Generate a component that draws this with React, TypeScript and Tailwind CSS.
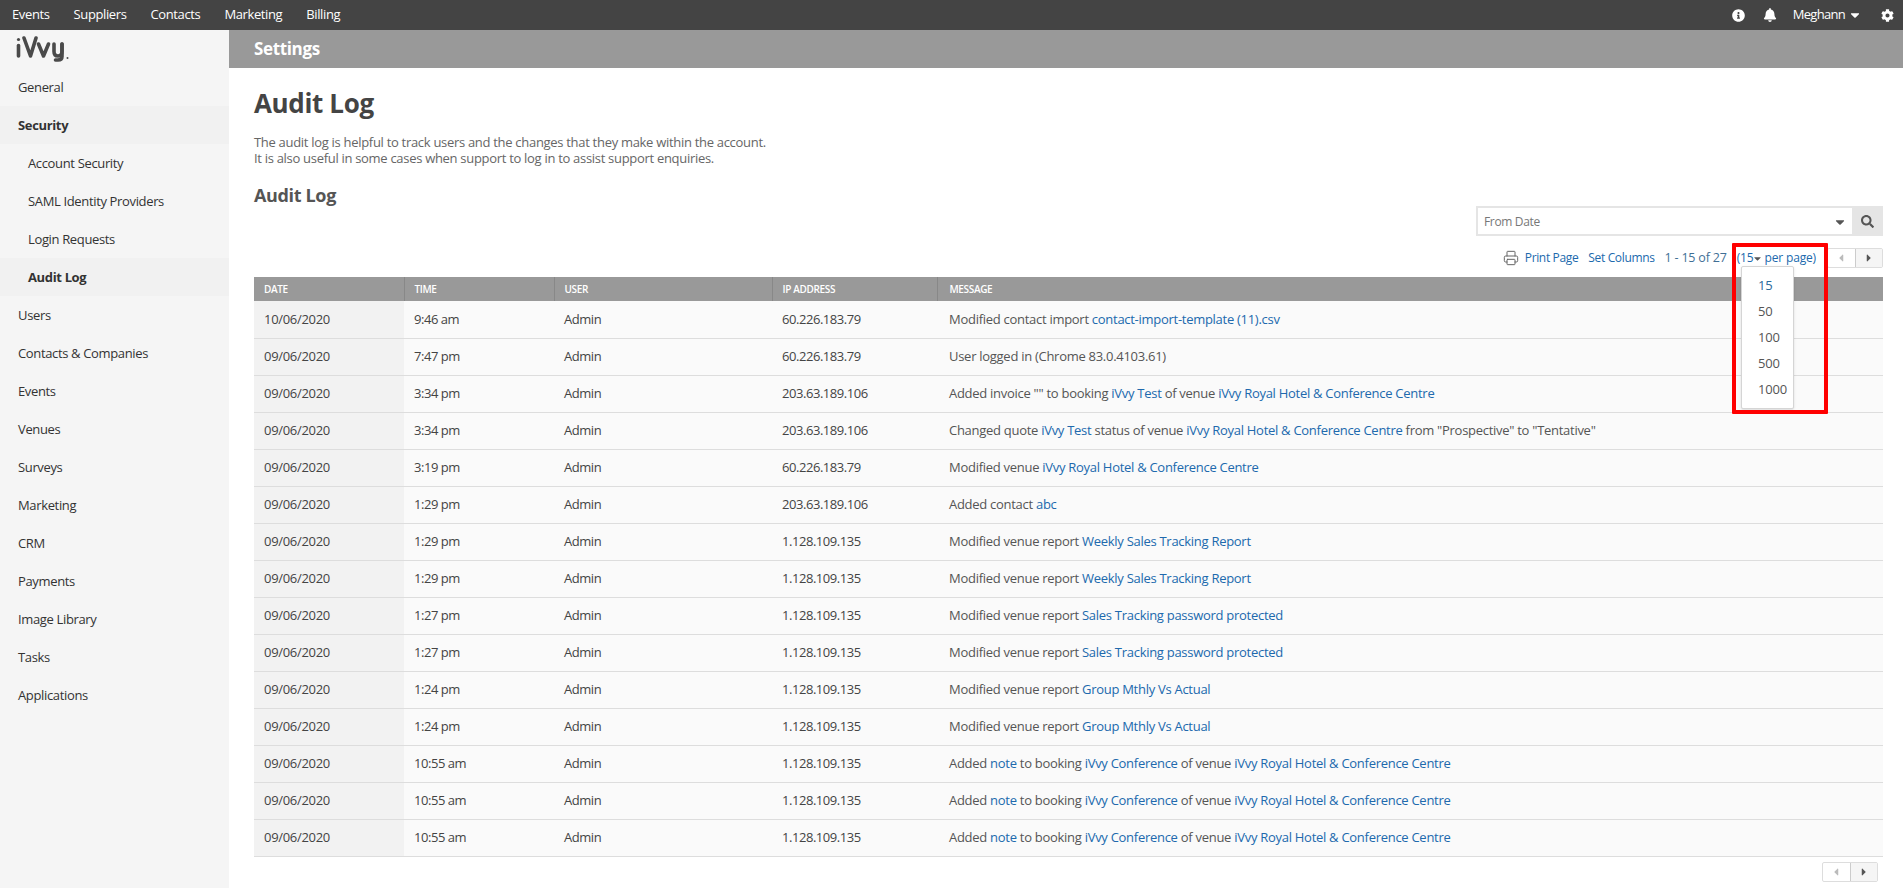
import { FaBell, FaCaretDown, FaCaretLeft, FaCaretRight, FaCog, FaInfoCircle, FaSearch } from "react-icons/fa";
import { Printer } from "lucide-react";

const topNav = ["Events", "Suppliers", "Contacts", "Marketing", "Billing"];

const sideNav = [
  { label: "General" },
  { label: "Security", active: true },
  { label: "Account Security", sub: true },
  { label: "SAML Identity Providers", sub: true },
  { label: "Login Requests", sub: true },
  { label: "Audit Log", sub: true, active: true },
  { label: "Users" },
  { label: "Contacts & Companies" },
  { label: "Events" },
  { label: "Venues" },
  { label: "Surveys" },
  { label: "Marketing" },
  { label: "CRM" },
  { label: "Payments" },
  { label: "Image Library" },
  { label: "Tasks" },
  { label: "Applications" },
];

const A = ({ children }: { children: React.ReactNode }) => (
  <a className="text-[#2069ad]">{children}</a>
);

const venue = "iVvy Royal Hotel & Conference Centre";

const rows: [string, string, string, React.ReactNode][] = [
  ["10/06/2020", "9:46 am", "60.226.183.79", <>Modified contact import <A>contact-import-template (11).csv</A></>],
  ["09/06/2020", "7:47 pm", "60.226.183.79", <>User logged in (Chrome 83.0.4103.61)</>],
  ["09/06/2020", "3:34 pm", "203.63.189.106", <>Added invoice "" to booking <A>iVvy Test</A> of venue <A>{venue}</A></>],
  ["09/06/2020", "3:34 pm", "203.63.189.106", <>Changed quote <A>iVvy Test</A> status of venue <A>{venue}</A> from "Prospective" to "Tentative"</>],
  ["09/06/2020", "3:19 pm", "60.226.183.79", <>Modified venue <A>{venue}</A></>],
  ["09/06/2020", "1:29 pm", "203.63.189.106", <>Added contact <A>abc</A></>],
  ["09/06/2020", "1:29 pm", "1.128.109.135", <>Modified venue report <A>Weekly Sales Tracking Report</A></>],
  ["09/06/2020", "1:29 pm", "1.128.109.135", <>Modified venue report <A>Weekly Sales Tracking Report</A></>],
  ["09/06/2020", "1:27 pm", "1.128.109.135", <>Modified venue report <A>Sales Tracking password protected</A></>],
  ["09/06/2020", "1:27 pm", "1.128.109.135", <>Modified venue report <A>Sales Tracking password protected</A></>],
  ["09/06/2020", "1:24 pm", "1.128.109.135", <>Modified venue report <A>Group Mthly Vs Actual</A></>],
  ["09/06/2020", "1:24 pm", "1.128.109.135", <>Modified venue report <A>Group Mthly Vs Actual</A></>],
  ["09/06/2020", "10:55 am", "1.128.109.135", <>Added <A>note</A> to booking <A>iVvy Conference</A> of venue <A>{venue}</A></>],
  ["09/06/2020", "10:55 am", "1.128.109.135", <>Added <A>note</A> to booking <A>iVvy Conference</A> of venue <A>{venue}</A></>],
  ["09/06/2020", "10:55 am", "1.128.109.135", <>Added <A>note</A> to booking <A>iVvy Conference</A> of venue <A>{venue}</A></>],
];

function Pager() {
  return (
    <div className="flex h-5 w-[56px] rounded-[2px] border border-[#ddd] text-[#555]">
      <div className="flex flex-1 items-center justify-center text-[#bbb]">
        <FaCaretLeft className="h-3 w-3" />
      </div>
      <div className="flex flex-1 items-center justify-center border-l border-[#ccc] bg-[#f5f5f5]">
        <FaCaretRight className="h-3 w-3" />
      </div>
    </div>
  );
}

function Logo() {
  return (
    <svg viewBox="0 0 60 26" className="h-[26px] w-[60px]" fill="none" stroke="#4a4a4a" strokeWidth="3.6" strokeLinecap="round" strokeLinejoin="round">
      <path d="M2.5 9.5V20" />
      <circle cx="2.5" cy="3.5" r="1.6" fill="#4a4a4a" stroke="none" />
      <path d="M8 2l6.5 18L20 2" />
      <path d="M22.5 8l5 12 5-12" />
      <path d="M38 8v7.5c0 3 1.7 4.5 4 4.5s4-1.500 4-4.500V8" />
      <path d="M46 8v12.500c0 2.500-1.800 3.500-4 3.500h-2.500" />
      <circle cx="51.500" cy="22" r="1" fill="#4a4a4a" stroke="none" />
    </svg>
  );
}

export default function App() {
  return (
    <div className="flex h-screen flex-col overflow-hidden bg-white font-['Open_Sans',sans-serif] text-[13px] tracking-[-0.35px] text-[#444]">
      {/* Top bar */}
      <header className="flex h-[30px] shrink-0 items-center justify-between bg-[#444] pl-3 pr-[9px] text-white">
        <nav className="flex gap-6 tracking-[-0.38px]">
          {topNav.map((item) => (
            <span key={item}>{item}</span>
          ))}
        </nav>
        <div className="flex items-center">
          <FaInfoCircle className="h-[13px] w-[13px]" />
          <FaBell className="ml-[18px] h-[14px] w-[14px]" />
          <span className="ml-[16px] tracking-[-0.7px]">Meghann</span>
          <FaCaretDown className="ml-[3px] h-[14px] w-[14px]" />
          <FaCog className="ml-[19px] h-[13px] w-[13px]" />
        </div>
      </header>

      <div className="flex min-h-0 flex-1">
        {/* Sidebar */}
        <aside className="w-[229px] shrink-0 bg-[#f5f5f5]">
          <div className="flex h-[38px] items-start pl-4 pt-[6px]">
            <Logo />
          </div>
          {sideNav.map((item) => (
            <div
              key={item.label}
              className={`flex h-[38px] items-center pt-[2px] text-[#333] ${item.sub ? "pl-7" : "pl-[18px]"} ${item.active ? "bg-[#f1f1f1] font-bold" : ""}`}
            >
              {item.label}
            </div>
          ))}
        </aside>

        {/* Main */}
        <main className="min-w-0 flex-1">
          <div className="flex h-[38px] items-center bg-[#999] pl-[25px] text-[17px] font-bold text-white">Settings</div>
          <div className="pl-[25px] pr-5">
            <h1 className="mt-[17px] text-[26px] leading-[36px] font-bold text-[#444]">Audit Log</h1>
            <p className="mt-[13px] leading-[16px] tracking-[-0.3px] text-[#666]">
              The audit log is helpful to track users and the changes that they make within the account.
              <br />
              It is also useful in some cases when support to log in to assist support enquiries.
            </p>
            <h3 className="mt-[17px] text-[18px] leading-[24px] font-bold text-[#555]">Audit Log</h3>

            <div className="mt-[-1px] flex justify-end">
              <div className="flex h-[30px] w-[407px] border-2 border-r-0 border-[#e5e5e5] text-[12px] text-[#777]">
                <div className="flex flex-1 items-center justify-between pl-[6px] pr-[5px] pt-[1px]">
                  From Date
                  <FaCaretDown className="h-[14px] w-[14px] text-[#555]" />
                </div>
                <div className="-my-[2px] flex w-[31px] items-center justify-center bg-[#e5e5e5]">
                  <FaSearch className="h-[13px] w-[13px] text-[#555]" />
                </div>
              </div>
            </div>

            <div className="relative mt-3 flex h-5 items-center justify-end text-[12px] tracking-[-0.15px] text-[#2069ad]">
              <Printer className="mr-[6px] h-[16px] w-[16px] text-[#666]" strokeWidth={1.5} />
              <span className="tracking-[-0.35px]">Print Page</span>
              <span className="ml-[10px] tracking-[-0.35px]">Set Columns</span>
              <span className="ml-[10px] text-[12.500px] tracking-[-0.2px] text-[#3f6f95]">1 - 15 of 27</span>
              <span className="ml-[10px] flex items-center">
                (15
                <FaCaretDown className="h-[11px] w-[9px] text-[#555]" />
                <span className="ml-[2px]">per page)</span>
              </span>
              <div className="ml-[11px]">
                <Pager />
              </div>

              {/* Open per-page menu */}
              <div className="absolute right-[89px] top-[18px] z-10 flex h-[143px] w-[53px] flex-col rounded-[2px] border border-[#d5d5d5] bg-white pt-[6px] pl-4 text-[13px] text-[#555] shadow-sm">
                {["15", "50", "100", "500", "1000"].map((n, i) => (
                  <span key={n} className={`flex h-[26px] shrink-0 items-center ${i === 0 ? "text-[#2c6a9c]" : ""}`}>
                    {n}
                  </span>
                ))}
              </div>
              {/* Red annotation box */}
              <div className="absolute right-[55px] top-[-5px] z-20 h-[171px] w-[96px] rounded-[1px] border-4 border-[#ff0000]" />
            </div>

            <table className="mt-[9px] w-full table-fixed border-collapse text-[13px] tracking-[-0.45px]">
              <colgroup>
                <col className="w-[150px]" />
                <col className="w-[150px]" />
                <col className="w-[218px]" />
                <col className="w-[165px]" />
                <col />
              </colgroup>
              <thead>
                <tr className="h-6 bg-[#999] text-left text-[10px] font-semibold tracking-[-0.35px] text-white">
                  {["DATE", "TIME", "USER", "IP ADDRESS", "MESSAGE"].map((h, i) => (
                    <th key={h} className={`font-semibold ${i === 4 ? "pl-3 pr-[10px]" : "border-r border-[#888] px-[10px]"}`}>
                      {h}
                    </th>
                  ))}
                </tr>
              </thead>
              <tbody>
                {rows.map(([date, time, ip, message], i) => (
                  <tr key={i} className="h-[37px] border-b border-[#ddd] bg-[#fafafa]">
                    <td className="bg-[#f2f2f2] px-[10px] tracking-[-0.3px]">{date}</td>
                    <td className="px-[10px]">{time}</td>
                    <td className="px-[10px]">Admin</td>
                    <td className="px-[10px]">{ip}</td>
                    <td className="pl-3 pr-[10px] tracking-[-0.28px] text-[#555]">{message}</td>
                  </tr>
                ))}
              </tbody>
            </table>

            <div className="mt-[5px] flex justify-end pr-[5px]">
              <Pager />
            </div>
          </div>
        </main>
      </div>
    </div>
  );
}
